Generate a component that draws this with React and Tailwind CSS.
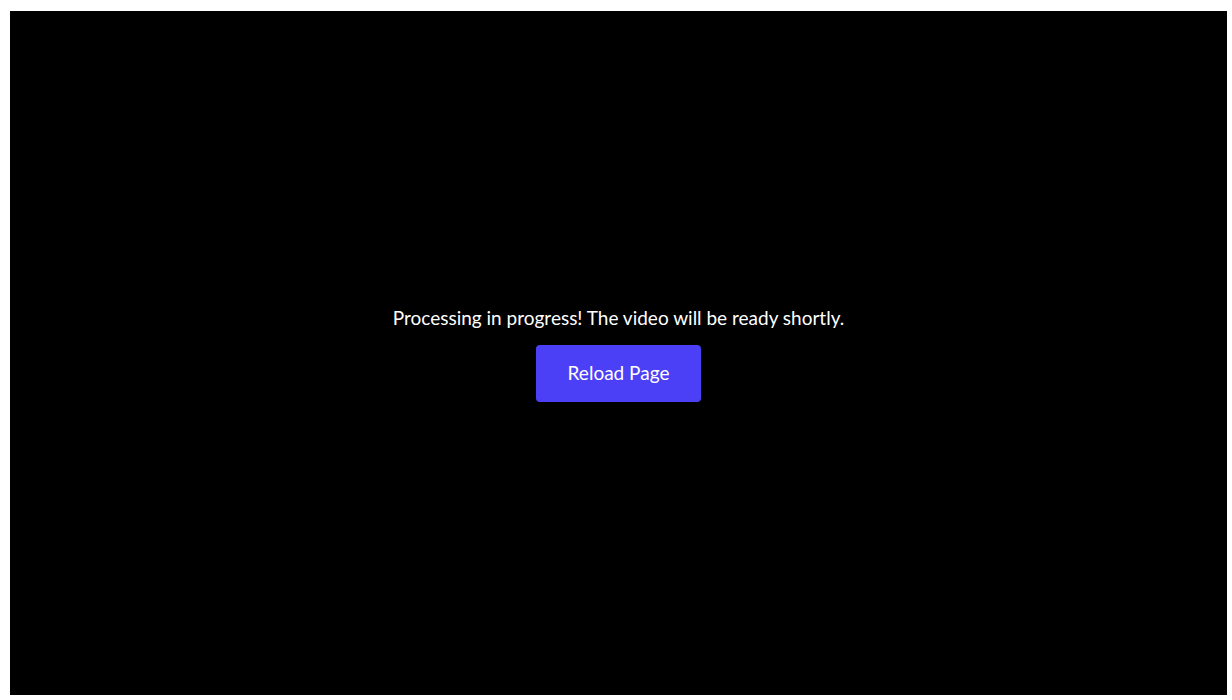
import React from 'react';

function App() {
  return (
    <div className="h-[700px] w-full bg-white pl-[10px] pt-[11px] pr-[5px] pb-[5px]">
      <div
        className="flex h-full w-full flex-col items-center justify-center bg-black pt-[2px]"
        style={{ fontFamily: 'Lato, "Noto Sans", sans-serif' }}
      >
        <p className="text-[19px] leading-[24px] text-white">
          Processing in progress! The video will be ready shortly.
        </p>
        <button
          onClick={() => window.location.reload()}
          className="mt-[15px] h-[57px] w-[165px] rounded-[4px] bg-[#4c40f7] text-[19px] text-white"
        >
          Reload Page
        </button>
      </div>
    </div>
  );
}

export default App;
